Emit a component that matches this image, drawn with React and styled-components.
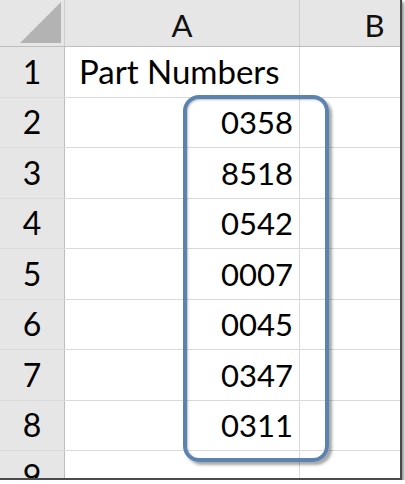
import React from "react";
import styled, { createGlobalStyle } from "styled-components";

const parts = ["0358", "8518", "0542", "0007", "0045", "0347", "0311"];

const App = () => {
  return (
    <>
      <GlobalStyle />
      <Sheet>
        <HeaderRow>
          <Corner>
            <CornerTriangle />
          </Corner>
          <ColHead>A</ColHead>
          <ColHead>B</ColHead>
        </HeaderRow>
        <Row>
          <RowHead>1</RowHead>
          <Cell>Part Numbers</Cell>
          <Cell />
        </Row>
        {parts.map((p, i) => (
          <Row key={p}>
            <RowHead>{i + 2}</RowHead>
            <Cell isRight>{p}</Cell>
            <Cell />
          </Row>
        ))}
        <Row>
          <RowHead>9</RowHead>
          <Cell />
          <Cell />
        </Row>
        <Highlight />
      </Sheet>
    </>
  );
};

export default App;

const GlobalStyle = createGlobalStyle`
  body {
    margin: 0;
    background: #ffffff;
    font-family: "Lato", "Open Sans", sans-serif;
  }
`;
const Sheet = styled.div`
  position: relative;
  width: 400px;
  height: 478px;
  overflow: hidden;
  background: #ffffff;
  border-right: 2px solid #4a4a4a;
  border-bottom: 2px solid #4a4a4a;
  box-shadow: 2px 2px 3px rgba(0, 0, 0, 0.45);
`;
const HeaderRow = styled.div`
  display: grid;
  grid-template-columns: 65px 235px 150px;
  height: 47px;
  background-color: #e6e6e6;
  border-bottom: 1px solid #bdbdbd;
  box-sizing: border-box;
`;
const Corner = styled.div`
  border-right: 1px solid #cfcfcf;
  display: flex;
  justify-content: flex-end;
  align-items: flex-end;
  padding: 0 3px 3px 0;
`;
const CornerTriangle = styled.div`
  width: 0;
  height: 0;
  border-left: 41px solid transparent;
  border-bottom: 41px solid #b3b3b3;
`;
const ColHead = styled.div`
  display: flex;
  justify-content: center;
  align-items: center;
  border-right: 1px solid #cfcfcf;
  font-size: 31px;
  color: #111111;
  padding-top: 3px;
`;
const Row = styled.div`
  display: grid;
  grid-template-columns: 65px 235px 150px;
  height: 50.5px;
  box-sizing: border-box;
  border-bottom: 1px solid #dadada;
`;
const RowHead = styled.div`
  background-color: #e6e6e6;
  border-right: 1px solid #bdbdbd;
  display: flex;
  justify-content: center;
  align-items: flex-end;
  padding-bottom: 6px;
  font-size: 32px;
  color: #000000;
`;
const Cell = styled.div`
  border-right: 1px solid #dadada;
  display: flex;
  align-items: flex-end;
  justify-content: ${({ isRight }) => (isRight ? "flex-end" : "flex-start")};
  padding: 0 6px 6px 14px;
  font-size: ${({ isRight }) => (isRight ? "31px" : "33px")};
  color: #000000;
  white-space: nowrap;
`;
const Highlight = styled.div`
  position: absolute;
  left: 183px;
  top: 95px;
  width: 146px;
  height: 367px;
  box-sizing: border-box;
  border: 4px solid #5b83b0;
  border-radius: 16px;
  box-shadow: 3px 3px 3px rgba(0, 0, 0, 0.35),
    inset 1px 1px 2px rgba(0, 0, 0, 0.25);
`;
